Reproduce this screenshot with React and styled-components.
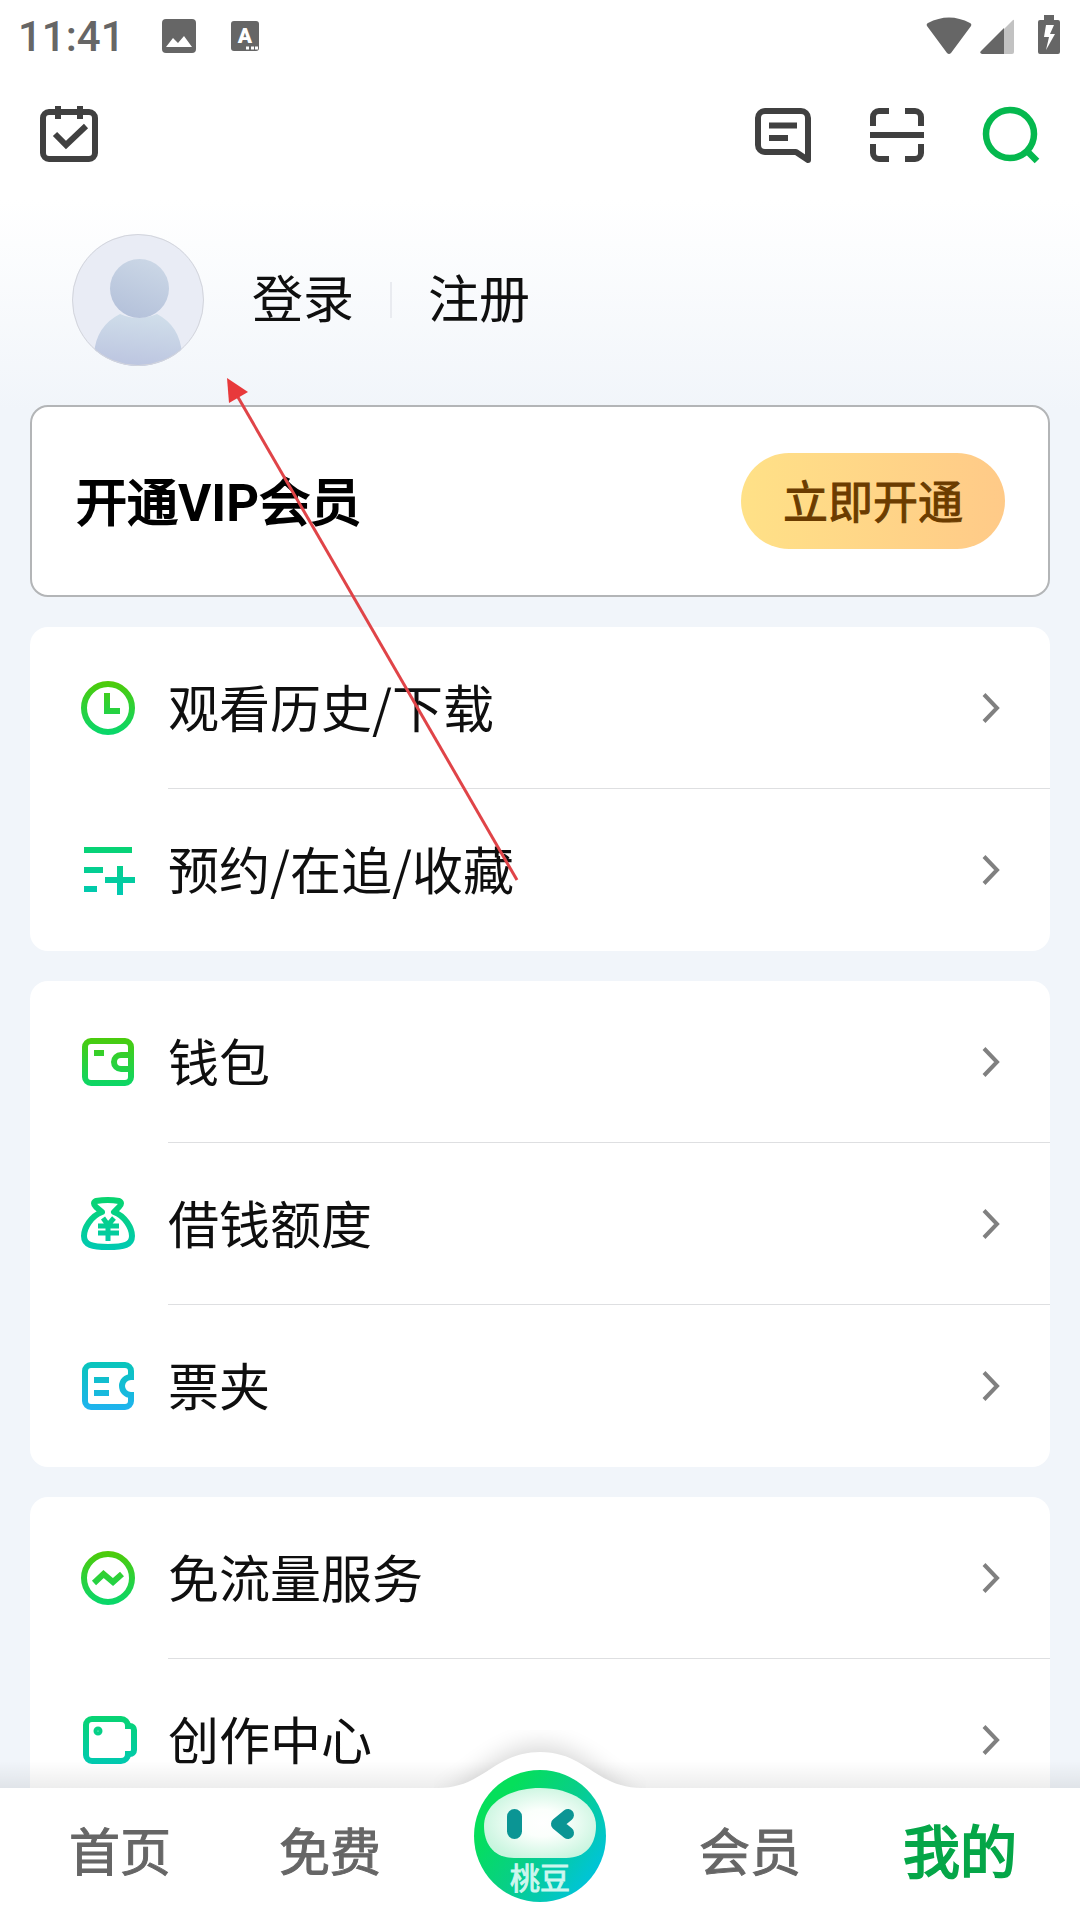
import React from 'react';

import styled, { createGlobalStyle } from 'styled-components';

const GlobalStyle = createGlobalStyle`
  * {
    box-sizing: border-box;
  }

  body {
    margin: 0;
    background: #f1f5fa;
    font-family: Roboto, 'Noto Sans CJK SC', sans-serif;
    color: #0f0f0f;
  }

  button {
    padding: 0;
    border: 0;
    background: none;
    font: inherit;
    color: inherit;
    cursor: pointer;
  }

  a {
    color: inherit;
    text-decoration: none;
  }

  svg {
    display: block;
    flex: none;
  }
`;

const Screen = styled.div`
  height: 100vh;
  display: flex;
  flex-direction: column;
`;

const Content = styled.main`
  position: relative;
  flex: 1;
  min-height: 0;
  overflow-y: auto;
  scrollbar-width: none;
  background: linear-gradient(#fff 0, #fff 200px, #f1f5fa 410px);
`;

const StatusBar = styled.div`
  height: 72px;
  padding: 0 20px 0 18px;
  display: flex;
  align-items: center;
  color: #666;
`;

const Clock = styled.time`
  width: 144px;
  padding-top: 2px;
  font-size: 42px;
  font-weight: 500;
  line-height: 72px;
`;

const StatusGroup = styled.div`
  display: flex;
  align-items: center;
  gap: ${({ $gap }) => $gap}px;
  margin-left: ${({ $end }) => ($end ? 'auto' : '0')};
`;

const Toolbar = styled.header`
  height: 126px;
  padding: 0 39px;
  display: flex;
  align-items: center;
  gap: 54px;
  color: #404040;

  button:first-child {
    margin-right: auto;
  }
`;

const IconButton = styled.button`
  width: 60px;
  height: 60px;
  color: ${({ $accent }) => ($accent ? '#05b84e' : '#404040')};
`;

const Profile = styled.section`
  padding: 36px 72px 39px;
  display: flex;
  align-items: center;
`;

const AuthLinks = styled.div`
  margin-left: 48px;
  display: flex;
  align-items: center;
  gap: 36px;
  font-family: 'Noto Sans CJK SC', sans-serif;
  font-size: 51px;
  line-height: 72px;

  a {
    padding-bottom: 8px;
  }
`;

const Separator = styled.span`
  width: 2px;
  height: 36px;
  background: #e9ebf0;
`;

const Cards = styled.div`
  padding: 0 30px 60px;
  display: flex;
  flex-direction: column;
  gap: 30px;
`;

const VipCard = styled.section`
  height: 192px;
  padding: 0 43px 0 44px;
  display: flex;
  align-items: center;
  justify-content: space-between;
  background: white;
  border: 2px solid #b3b5b7;
  border-radius: 18px;

  h2 {
    margin: 0;
    padding-top: 6px;
    font-size: 51px;
    font-weight: 400;
    line-height: 72px;
    color: #000;
    -webkit-text-stroke: 2px currentColor;
  }

  b {
    font-weight: 700;
    -webkit-text-stroke: 0;
  }
`;

const VipButton = styled.button`
  && {
    width: 264px;
    height: 96px;
    padding-bottom: 4px;
    border-radius: 48px;
    background: linear-gradient(90deg, #ffe187, #ffca88);
    font-size: 45px;
    color: #6b3c00;
    -webkit-text-stroke: 1px currentColor;
  }
`;

const Card = styled.ul`
  margin: 0;
  padding: 0;
  list-style: none;
  background: white;
  border-radius: 18px;
`;

const Row = styled.a`
  height: 162px;
  padding-left: 48px;
  display: flex;
  align-items: center;
  gap: 30px;
`;

const RowBody = styled.span`
  flex: 1;
  height: 162px;
  padding-right: 49px;
  display: flex;
  align-items: center;
  justify-content: space-between;
  border-bottom: 1px solid ${({ $last }) => ($last ? 'transparent' : '#dedfe1')};
`;

const RowLabel = styled.span`
  padding-bottom: 4px;
  font-family: 'Noto Sans CJK SC', sans-serif;
  font-size: 51px;
  line-height: 72px;
`;

const TabBar = styled.nav`
  position: relative;
  height: 132px;
  padding: 0 15px;
  display: flex;
  background: white;

  &::before {
    content: '';
    position: absolute;
    left: 0;
    right: 0;
    bottom: 100%;
    height: 27px;
    background: linear-gradient(rgba(0, 0, 0, 0), rgba(0, 0, 0, 0.07));
    pointer-events: none;
  }
`;

const Bump = styled.svg`
  position: absolute;
  left: 50%;
  bottom: 100%;
  margin-left: -106px;
  pointer-events: none;
`;

const Tab = styled.a`
  flex: 1;
  display: flex;
  align-items: center;
  justify-content: center;
  font-size: ${({ $active }) => ($active ? 57 : 51)}px;
  line-height: 72px;
  color: ${({ $active }) => ($active ? '#05a648' : '#666')};
  -webkit-text-stroke: ${({ $active }) => ($active ? 2 : 1)}px currentColor;
`;

const CenterTab = styled.a`
  position: relative;
  flex: 1;
  display: flex;
  justify-content: center;

  svg {
    margin-top: -18px;
  }
`;

const CenterLabel = styled.span`
  position: absolute;
  left: 0;
  right: 0;
  bottom: 17px;
  text-align: center;
  font-size: 30px;
  line-height: 48px;
  color: #cdf6ee;
  -webkit-text-stroke: 1px currentColor;
`;

const Pointer = styled.svg`
  position: absolute;
  top: 378px;
  left: 227px;
  pointer-events: none;
`;

const tones = {
  green: ['#4ecb08', '#08d76c'],
  teal: ['#08d46f', '#00c9b4'],
  blue: ['#08c6b8', '#20b2f2'],
};

const glyphs = {
  history: (
    <>
      <circle cx="30" cy="30" r="24" />
      <path d="M29 15V33H42" />
    </>
  ),
  list: (
    <g strokeLinecap="butt">
      <path d="M6 10H54M6 30H25M6 49H19M42 26V55M27 40H57" />
    </g>
  ),
  wallet: (
    <>
      <rect x="7" y="9" width="46" height="42" rx="6" />
      <path d="M16 21H26M53 23H43a7 7 0 0 0 0 14H53" />
    </>
  ),
  loan: (
    <>
      <path
        d="M18 7Q30 5 41 7Q45 9 41 13L36 18C47 22 54 34 54 42C54 51 46 53 30 53C14 53 6 51 6 42C6 34 13 22 24 18L18 13Q14 9 18 7Z"
        strokeLinejoin="round"
      />
      <path d="M25 24L30 31L36 24M20 32H41M20 39H41M30 31V47" strokeWidth="5" />
    </>
  ),
  ticket: (
    <path d="M53 21V15a6 6 0 0 0-6-6H13a6 6 0 0 0-6 6V45a6 6 0 0 0 6 6H47a6 6 0 0 0 6-6V39a9 9 0 0 1 0-18ZM16 24H31M16 37H31" />
  ),
  data: (
    <>
      <circle cx="30" cy="30" r="24" />
      <path d="M16 35L25.500 26L35 34L44 26" />
    </>
  ),
  studio: (
    <>
      <path d="M50 19V16a7 7 0 0 0-7-7H14a6 6 0 0 0-6 6V45a6 6 0 0 0 6 6H43a7 7 0 0 0 7-7V41" />
      <path d="M47 16H52a4 4 0 0 1 4 4V40a4 4 0 0 1-4 4H47" />
      <circle cx="20" cy="21" r="2" strokeWidth="5" />
    </>
  ),
};

const groups = [
  [
    { label: '观看历史/下载', icon: 'history', tone: 'green' },
    { label: '预约/在追/收藏', icon: 'list', tone: 'teal' },
  ],
  [
    { label: '钱包', icon: 'wallet', tone: 'green' },
    { label: '借钱额度', icon: 'loan', tone: 'teal' },
    { label: '票夹', icon: 'ticket', tone: 'blue' },
  ],
  [
    { label: '免流量服务', icon: 'data', tone: 'green' },
    { label: '创作中心', icon: 'studio', tone: 'teal' },
  ],
];

const RowIcon = ({ name, tone }) => (
  <svg width="60" height="60" fill="none" strokeWidth="6" stroke={`url(#${name}-tone)`}>
    <defs>
      <linearGradient
        id={`${name}-tone`}
        gradientUnits="userSpaceOnUse"
        x1="0"
        y1="4"
        x2="0"
        y2="56"
      >
        <stop stopColor={tones[tone][0]} />
        <stop offset="1" stopColor={tones[tone][1]} />
      </linearGradient>
    </defs>
    {glyphs[name]}
  </svg>
);

const Chevron = () => (
  <svg width="21" height="36" fill="none" stroke="#808080" strokeWidth="4">
    <path d="M4 4.500L17 18L4 31.500" />
  </svg>
);

const Status = () => (
  <StatusBar>
    <Clock>11:41</Clock>
    <StatusGroup $gap={35}>
      <svg width="34" height="34">
        <rect width="34" height="34" rx="4" fill="currentColor" />
        <path d="M4 28L11 19L16 24L22 17L30 28Z" fill="#fff" />
      </svg>
      <svg width="28" height="30">
        <rect width="28" height="30" rx="3" fill="currentColor" />
        <text
          x="14"
          y="22"
          textAnchor="middle"
          fontFamily="Roboto, sans-serif"
          fontSize="21"
          fontWeight="900"
          fill="#fff"
        >
          A
        </text>
        <path d="M15 27H18M20 27H23M24 27H27" stroke="#fff" strokeWidth="3" />
      </svg>
    </StatusGroup>
    <StatusGroup $gap={8} $end>
      <svg width="46" height="38" fill="currentColor">
        <path d="M1 9Q0 7 2 6Q23-5 44 6Q46 7 45 9L25 36Q23 38 21 36Z" />
      </svg>
      <svg width="50" height="38" fill="currentColor">
        <path d="M24 12L33 3Q34 2 34 4V35Q34 37 32 37H24Z" opacity="0.4" />
        <path d="M24 11V37H2Q-1 36 1 34Z" />
      </svg>
      <svg width="22" height="42" fill="currentColor">
        <path
          d="M6 0H16V5H20Q22 5 22 7V37Q22 39 20 39H2Q0 39 0 37V7Q0 5 2 5H6ZM8 10L6 22H11L8 35L17 19H12L16 10Z"
          fillRule="evenodd"
        />
      </svg>
    </StatusGroup>
  </StatusBar>
);

const Actions = () => (
  <Toolbar>
    <IconButton aria-label="签到">
      <svg width="60" height="60" fill="none" stroke="currentColor" strokeWidth="6">
        <rect x="4" y="7" width="52" height="47" rx="6" />
        <path d="M19 1V14M41 1V14M16 29L27 40L47 21" />
      </svg>
    </IconButton>
    <IconButton aria-label="消息">
      <svg width="60" height="60" fill="none" stroke="currentColor" strokeWidth="6">
        <path
          d="M55 55L43 47H12a7 7 0 0 1-7-7V13a7 7 0 0 1 7-7H48a7 7 0 0 1 7 7Z"
          strokeLinejoin="round"
        />
        <path d="M16 20.500H44M16 33H35" />
      </svg>
    </IconButton>
    <IconButton aria-label="扫一扫">
      <svg width="60" height="60" fill="none" stroke="currentColor" strokeWidth="6">
        <path d="M22 6H12a6 6 0 0 0-6 6V21M38 6H48a6 6 0 0 1 6 6V21M22 54H12a6 6 0 0 1-6-6V39M38 54H48a6 6 0 0 0 6-6V39M3 30H57" />
      </svg>
    </IconButton>
    <IconButton aria-label="搜索" $accent>
      <svg width="60" height="60" fill="none" stroke="currentColor" strokeWidth="6.500">
        <circle cx="29" cy="29" r="24" />
        <path d="M45 45L56 56" />
      </svg>
    </IconButton>
  </Toolbar>
);

const Avatar = () => (
  <svg width="132" height="132" role="img" aria-label="头像">
    <defs>
      <linearGradient id="head" x1="0.700" y1="0" x2="0.300" y2="1">
        <stop stopColor="#cbd7e6" />
        <stop offset="1" stopColor="#b4c1da" />
      </linearGradient>
      <linearGradient id="body" x1="0.600" y1="0" x2="0.400" y2="1">
        <stop stopColor="#d0deea" />
        <stop offset="1" stopColor="#bcc5e0" />
      </linearGradient>
      <clipPath id="round">
        <circle cx="66" cy="66" r="66" />
      </clipPath>
    </defs>
    <g clipPath="url(#round)">
      <rect width="132" height="132" fill="#e9ecf5" />
      <path d="M22 132V120Q24 92 48 80Q66 88 85 80Q108 92 110 120V132Z" fill="url(#body)" />
      <circle cx="67.500" cy="54.500" r="29.500" fill="url(#head)" />
    </g>
    <circle cx="66" cy="66" r="65.500" fill="none" stroke="#d3d5dc" />
  </svg>
);

const Mascot = () => (
  <svg width="132" height="132">
    <defs>
      <linearGradient id="ball" x1="0.200" y1="0.250" x2="0.920" y2="0.750">
        <stop stopColor="#05df5b" />
        <stop offset="0.450" stopColor="#08cf86" />
        <stop offset="1" stopColor="#00c4d6" />
      </linearGradient>
      <radialGradient id="face" cx="0.520" cy="0.500" r="0.550">
        <stop stopColor="#fff" />
        <stop offset="0.350" stopColor="#fbfffc" />
        <stop offset="1" stopColor="#c9f5df" />
      </radialGradient>
    </defs>
    <circle cx="66" cy="66" r="66" fill="url(#ball)" />
    <path
      d="M66 18C98 18 122 34 122 56C122 74 112 88 92 88H40C20 88 10 74 10 56C10 34 34 18 66 18Z"
      fill="url(#face)"
    />
    <rect x="33" y="39" width="15" height="30" rx="7.500" fill="#0b9594" />
    <path
      d="M94 45L83 54L94 63"
      fill="none"
      stroke="#0b9594"
      strokeWidth="12"
      strokeLinecap="round"
      strokeLinejoin="round"
    />
  </svg>
);

const Tabs = () => (
  <TabBar>
    <Bump width="212" height="58">
      <defs>
        <filter id="soft" x="-20%" y="-60%" width="140%" height="220%">
          <feGaussianBlur stdDeviation="12" />
        </filter>
      </defs>
      <path
        d="M0 70C40 58 60 16 106 16C152 16 172 58 212 70Z"
        fill="#000"
        opacity="0.160"
        filter="url(#soft)"
      />
      <path d="M4 58C50 58 60 22 106 22C152 22 162 58 208 58Z" fill="#fff" />
    </Bump>
    <Tab href="#home">首页</Tab>
    <Tab href="#free">免费</Tab>
    <CenterTab href="#taodou">
      <Mascot />
      <CenterLabel>桃豆</CenterLabel>
    </CenterTab>
    <Tab href="#vip">会员</Tab>
    <Tab href="#mine" $active>
      我的
    </Tab>
  </TabBar>
);

const App = () => {
  return (
    <Screen>
      <GlobalStyle />
      <Content>
        <Status />
        <Actions />
        <Profile>
          <Avatar />
          <AuthLinks>
            <a href="#login">登录</a>
            <Separator />
            <a href="#register">注册</a>
          </AuthLinks>
        </Profile>
        <Cards>
          <VipCard>
            <h2>
              开通<b>VIP</b>会员
            </h2>
            <VipButton>立即开通</VipButton>
          </VipCard>
          {groups.map((rows) => (
            <Card key={rows[0].icon}>
              {rows.map(({ label, icon, tone }, i) => (
                <li key={icon}>
                  <Row href={`#${icon}`}>
                    <RowIcon name={icon} tone={tone} />
                    <RowBody $last={i === rows.length - 1}>
                      <RowLabel>{label}</RowLabel>
                      <Chevron />
                    </RowBody>
                  </Row>
                </li>
              ))}
            </Card>
          ))}
        </Cards>
        <Pointer width="294" height="506">
          <path d="M8 14L290 502" stroke="#e04448" strokeWidth="3" />
          <path d="M0 0L21 14L2 25Z" fill="#e8393b" />
        </Pointer>
      </Content>
      <Tabs />
    </Screen>
  );
};

export default App;
